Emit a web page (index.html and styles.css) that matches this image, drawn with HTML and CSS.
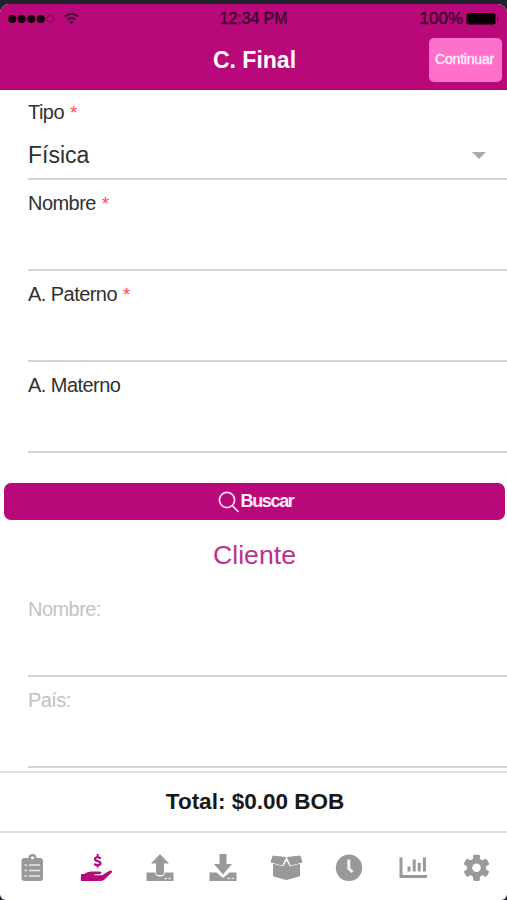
FILE: index.html
```html
<!DOCTYPE html>
<html lang="es">
<head>
<meta charset="utf-8">
<title>C. Final</title>
<link rel="stylesheet" href="styles.css">
</head>
<body>
<div class="phone">
  <header class="header">
    <div class="status">
      <div class="signal">
        <svg width="76" height="14" viewBox="0 0 76 14"><g fill="#16000f"><circle cx="12.3" cy="7" r="4.1"/><circle cx="21.8" cy="7" r="4.1"/><circle cx="31.3" cy="7" r="4.1"/><circle cx="40.8" cy="7" r="4.1"/></g><circle cx="50.3" cy="7" r="3.5" fill="none" stroke="#7c0559"/><g fill="none" stroke="#4d0337" stroke-width="2"><path d="M64.800 4.700Q71.500-1.300 78.200 4.700"/><path d="M67.500 7.700Q71.500 4.100 75.500 7.700"/></g><path d="M69.300 9.900Q71.500 8.300 73.700 9.900L71.500 12.200Z" fill="#300022"/></svg>
      </div>
      <div class="time">12:34 PM</div>
      <div class="battery"><span>100%</span><svg width="34" height="14" viewBox="0 0 34 14"><rect x=".5" y="1" width="29" height="11.500" rx="2" fill="#090006"/><path d="M31 5q3 2 0 4Z" fill="#35002a"/></svg></div>
    </div>
    <div class="bar">
      <h1 class="title">C. Final</h1>
      <button class="continue">Continuar</button>
    </div>
  </header>
  <main class="content">
    <div class="field"><label class="label">Tipo <span class="req">*</span></label>
      <div class="select"><span>Física</span><i class="caret"></i></div></div>
    <div class="field"><label class="label">Nombre <span class="req">*</span></label></div>
    <div class="field"><label class="label">A. Paterno <span class="req">*</span></label></div>
    <div class="field"><label class="label">A. Materno</label></div>
    <button class="search">
      <svg width="22" height="24" viewBox="0 0 22 24" fill="none" stroke="#fbd9ee" stroke-width="1.7"><circle cx="9" cy="10" r="7.600"/><path d="M14.300 15.600L20.500 22"/></svg><span>Buscar</span>
    </button>
    <h2 class="section">Cliente</h2>
    <div class="field muted"><label class="label">Nombre:</label></div>
    <div class="field muted"><label class="label">País:</label></div>
  </main>
  <div class="total">Total: $0.00 BOB</div>
  <nav class="tabs">
    <svg viewBox="0 0 34 32"><path d="M8.500 5H11.500a4 4 0 0 1 8 0H23q3 0 3 3V25q0 3-3 3H7.500q-3 0-3-3V8q0-3 3-3Z" fill="#999"/><circle cx="15.500" cy="4.700" r="1.500" fill="#fff"/><path d="M12 12H23M12 17.500H23M12 23H23M7.500 12H10M7.500 17.500H10M7.500 23H10" fill="none" stroke="#e9e9e9" stroke-width="1.600"/></svg>
    <svg viewBox="0 0 34 32"><path d="M1 21H4Q8 18 12 18.500H20Q23 19.300 20 21.300H14.500V22.300H22L29 18Q32.500 16.800 32 19.200L24.500 26.500Q22.500 28 20 28H1Z" fill="#b9087a"/><g fill="none" stroke="#b9087a"><path stroke-width="2.200" d="M20.800 5.500Q17.500 3.300 15.300 5Q14 7.500 18 8.200Q21.500 9.200 20.200 11.300Q17.500 13 14.200 11"/><path stroke-width="2" d="M17.700 1V4M17.700 12V14.500"/></g></svg>
    <svg viewBox="0 0 34 32"><path d="M2.500 19.500H11.200V20.500Q12 23.500 16 23.500Q20 23.500 20.800 20.500V19.500H29.500V28H2.500Z" fill="#999"/><path d="M16 1L25 10.500H20V20q0 2-2 2h-4q-2 0-2-2V10.500H7Z" fill="#999"/><path d="M20.500 25.500H23M24.500 25.500H27" stroke="#e5e5e5" stroke-width="1.500"/></svg>
    <svg viewBox="0 0 34 32"><path d="M2.500 19.500H9.500L16 25L22.500 19.500H29.500V28H2.500Z" fill="#999"/><path d="M12.500 1H19.500V11H25L16 21.500L7 11H12.500Z" fill="#999"/><path d="M20.500 25.500H23M24.500 25.500H27" stroke="#e5e5e5" stroke-width="1.500"/></svg>
    <svg viewBox="0 0 34 32"><path d="M3 3L15.500 4.500L12.200 12L1 9ZM30 3L17.500 4.500L20.800 12L32 9ZM3.500 11.300L13.300 14L16.500 8.500L19.700 14L29.500 11.300V23L16.500 26.500L3.500 23Z" fill="#999" stroke="#999" stroke-linejoin="round"/></svg>
    <svg viewBox="0 0 34 32"><circle cx="16" cy="14.800" r="13.200" fill="#999"/><path d="M15.800 6.500V15.500L19.500 19" fill="none" stroke="#f5f5f5" stroke-width="3"/></svg>
    <svg viewBox="0 0 34 32"><path fill="none" stroke="#999" stroke-width="3" d="M4 4.500V23.500H30M12 13.500V18.500M17.200 6.500V18.500M22.200 10V18.500M27.400 4.500V18.500"/></svg>
    <svg viewBox="0 0 34 32"><g fill="#999"><circle cx="16.500" cy="14.800" r="9.600"/><rect x="13.100" y="1.700" width="6.800" height="26.200" rx="1.400"/><rect x="13.100" y="1.700" width="6.800" height="26.200" rx="1.400" transform="rotate(60 16.500 14.800)"/><rect x="13.100" y="1.700" width="6.800" height="26.200" rx="1.400" transform="rotate(120 16.500 14.800)"/></g><circle cx="16.500" cy="14.800" r="4.300" fill="#fff"/></svg>
  </nav>
</div>
</body>
</html>
```
FILE: styles.css
```css
* { box-sizing: border-box; }
body {
  margin: 0;
  height: 900px;
  padding-top: 4px;
  background: #20232b;
  font-family: "Liberation Sans", Arial, sans-serif;
  overflow: hidden;
}
button { border: 0; padding: 0; font-family: inherit; }
.phone {
  height: 896px;
  display: flex;
  flex-direction: column;
  background: #fff;
  border-radius: 9px 9px 6px 6px;
  overflow: hidden;
}
.header { flex: none; height: 86px; background: #b9087a; border-bottom: 1px solid #a6066e; }
.status {
  display: grid;
  grid-template-columns: 1fr auto 1fr;
  height: 29px;
  align-items: center;
  color: #35022a;
  font-size: 15.8px;
  line-height: 28px;
  -webkit-text-stroke: .35px #35022a;
}
.signal, .battery { display: flex; align-items: center; }
.signal svg { overflow: visible; }
.battery { justify-content: flex-end; gap: 3px; padding-right: 7px; font-size: 17px; }
.bar {
  display: grid;
  grid-template-columns: 1fr auto 1fr;
  align-items: center;
  height: 54px;
}
.title { grid-column: 2; margin: 0; padding-left: 2px; color: #fff; font-size: 23px; line-height: 30px; }
.continue {
  justify-self: end;
  width: 73px;
  height: 44px;
  margin-right: 5px;
  padding: 0 2px 3px 0;
  border-radius: 5px;
  background: #ff70cb;
  color: #fff0fa;
  font-size: 14px;
  letter-spacing: -.2px;
  -webkit-text-stroke: .4px #fff0fa;
}
.content { flex: none; height: 681px; overflow: hidden; }
.field {
  height: 91px;
  margin-left: 28px;
  padding-top: 12px;
  border-bottom: 2px solid #d3d3d3;
  color: #303030;
}
.field:first-child { height: 90px; padding-top: 11px; }
.label { display: block; font-size: 20px; line-height: 22px; letter-spacing: -.55px; }
.req { margin-left: 1px; color: #ff4961; font-size: 19px; }
.select {
  display: flex;
  align-items: center;
  justify-content: space-between;
  height: 42px;
  margin-top: 10px;
  padding-right: 21px;
  font-size: 23px;
}
.caret {
  border: 7px solid transparent;
  border-top-color: #aaa;
  border-bottom: 0;
}
.search {
  display: flex;
  align-items: center;
  justify-content: center;
  gap: 1px;
  width: 501px;
  height: 37px;
  margin: 30px 0 0 4px;
  padding-left: 2px;
  border-radius: 7px;
  background: #b9087a;
  color: #fff0fa;
  font-size: 18px;
  font-weight: bold;
  letter-spacing: -1.35px;
}
.section { margin: 20px 0 16px; padding-left: 2px; text-align: center; color: #bd308e; font-size: 26.7px; line-height: 30px; font-weight: normal; }
.field.muted { color: #c2c2c2; }
.total {
  flex: none;
  height: 60px;
  padding-left: 3px;
  border-top: 2px solid #dedede;
  color: #181818;
  text-align: center;
  font-size: 22.5px;
  font-weight: bold;
  line-height: 57px;
}
.tabs {
  flex: 1;
  display: flex;
  justify-content: space-between;
  padding: 20px 13px 0 17px;
  border-top: 2px solid #dedede;
}
.tabs svg { width: 34px; height: 32px; }
```
